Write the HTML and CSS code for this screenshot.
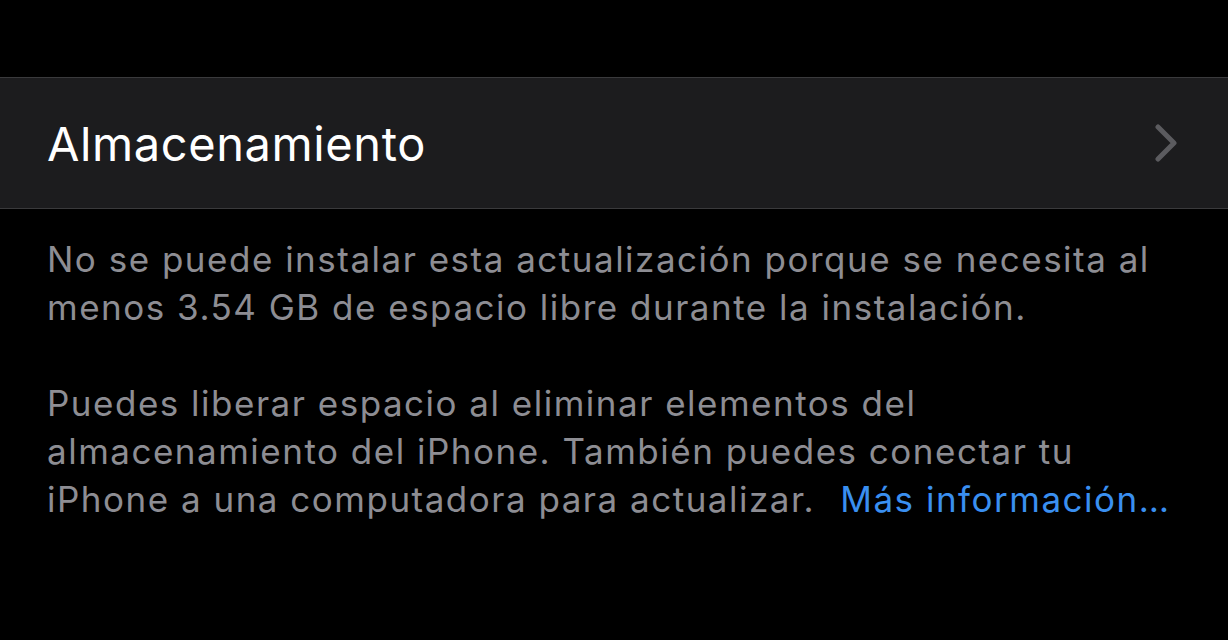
FILE: index.html
```html
<!DOCTYPE html>
<html lang="es">
<head>
  <meta charset="UTF-8" />
  <meta name="viewport" content="width=device-width, initial-scale=1.0" />
  <title>Almacenamiento</title>
  <link rel="stylesheet" href="styles.css">
</head>
<body>
  <div class="group">
    <div class="row">
      <span class="row-title">Almacenamiento</span>
      <svg class="chevron" width="24" height="38" viewBox="0 0 24 38">
        <path d="M3 3 L19 19 L3 35" fill="none" stroke="#5b5b5f" stroke-width="5" stroke-linecap="round" stroke-linejoin="round"/>
      </svg>
    </div>
  </div>

  <div class="footer">
    <p>No se puede instalar esta actualización porque se necesita al menos 3.54 GB de espacio libre durante la instalación.</p>
    <p>Puedes liberar espacio al eliminar elementos del almacenamiento del iPhone. También puedes conectar tu iPhone a una computadora para actualizar. <a href="#">Más información…</a></p>
  </div>
</body>
</html>
```

FILE: styles.css
```css
body {
  margin: 0;
  background: #000;
  font-family: Inter, 'Noto Sans', sans-serif;
  padding-top: 77px;
  height: 563px;
  overflow: hidden;
}

.group {
  background: #1c1c1e;
  border-top: 1px solid #3a3a3c;
  border-bottom: 1px solid #3a3a3c;
}

.row {
  height: 130px;
  display: flex;
  align-items: center;
  justify-content: space-between;
  padding: 0 47px 0 47px;
}

.row-title {
  color: #fff;
  font-size: 47px;
  letter-spacing: 0.6px;
}

.chevron {
  margin-right: 2px;
}

.footer {
  padding: 26px 47px 0 47px;
  width: 1135px;
}

.footer p {
  margin: 0 0 48px 0;
  color: #8d8d93;
  font-size: 35px;
  letter-spacing: 1.5px;
  line-height: 48px;
}

.footer a {
  margin-left: 14px;
  color: #3a8ff0;
  text-decoration: none;
}
```
